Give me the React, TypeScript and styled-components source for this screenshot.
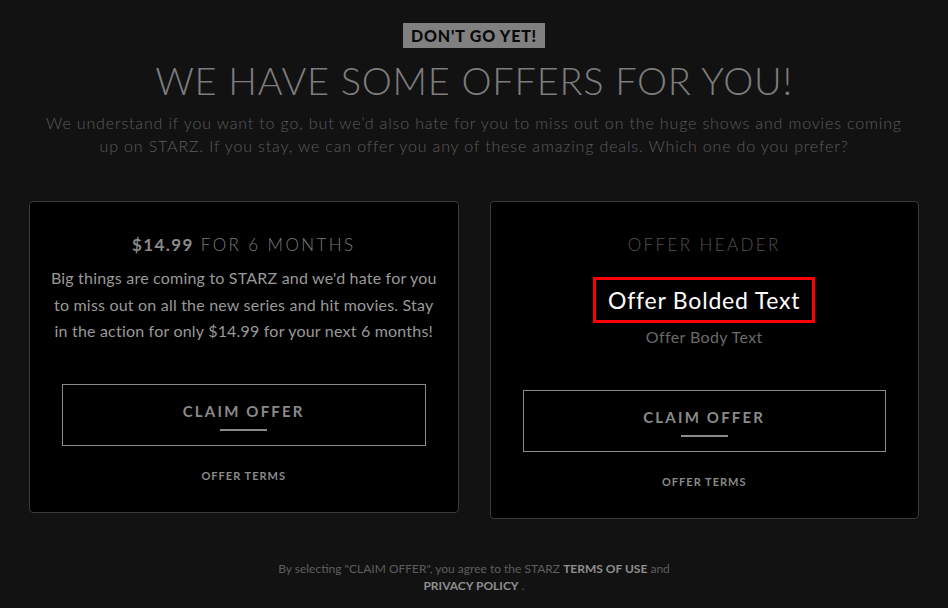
import React from "react";
import styled, { createGlobalStyle } from "styled-components";

const GlobalStyle = createGlobalStyle`
  html, body {
    margin: 0;
    padding: 0;
    background: #121212;
  }
  body {
    font-family: Lato, "Open Sans", "Liberation Sans", sans-serif;
  }
  * {
    box-sizing: border-box;
  }
`;

type Offer = {
  price?: string;
  header: string;
  bolded?: string;
  body: string;
};

// body copy keeps the line breaks of the design
const offers: Offer[] = [
  {
    price: "$14.99",
    header: "FOR 6 MONTHS",
    body:
      "Big things are coming to STARZ and we'd hate for you\nto miss out on all the new series and hit movies. Stay\nin the action for only $14.99 for your next 6 months!",
  },
  {
    header: "OFFER HEADER",
    bolded: "Offer Bolded Text",
    body: "Offer Body Text",
  },
];

const OfferCard = ({ offer }: { offer: Offer }) => (
  <Card>
    <CardHeader $dim={!offer.price}>
      {offer.price && <strong>{offer.price}</strong>} {offer.header}
    </CardHeader>
    {offer.bolded && <Bolded>{offer.bolded}</Bolded>}
    <CardBody $small={!!offer.bolded}>{offer.body}</CardBody>
    <ClaimButton $spaced={!!offer.bolded}>
      CLAIM OFFER
      <Underline />
    </ClaimButton>
    <Terms>OFFER TERMS</Terms>
  </Card>
);

const App = () => {
  return (
    <Page>
      <GlobalStyle />
      <Badge>DON'T GO YET!</Badge>
      <Title>WE HAVE SOME OFFERS FOR YOU!</Title>
      <Intro>
        We understand if you want to go, but we’d also hate for you to miss out
        on the huge shows and movies coming up on STARZ. If you stay, we can
        offer you any of these amazing deals. Which one do you prefer?
      </Intro>
      <Cards>
        {offers.map((o) => (
          <OfferCard key={o.header} offer={o} />
        ))}
      </Cards>
      <Footer>
        By selecting "CLAIM OFFER", you agree to the STARZ <b>TERMS OF USE</b>{" "}
        and
        <br />
        <b>PRIVACY POLICY</b> .
      </Footer>
    </Page>
  );
};
export default App;

const Page = styled.div`
  width: 948px;
  height: 608px;
  background: #121212;
  display: flex;
  flex-direction: column;
  align-items: center;
  padding: 23px 29px 0;
  overflow: hidden;
`;

const Badge = styled.div`
  background: #808080;
  color: #0a0a0a;
  font-weight: 900;
  font-size: 16px;
  letter-spacing: 0.8px;
  padding: 0 8px;
  height: 25px;
  line-height: 25px;
`;

const Title = styled.h1`
  margin: 10px 0 0;
  font-size: 38px;
  font-weight: 300;
  letter-spacing: 0.7px;
  color: #7d7d7d;
  line-height: 44px;
`;

const Intro = styled.p`
  margin: 9px 0 0;
  width: 880px;
  text-align: center;
  font-size: 16px;
  font-weight: 300;
  line-height: 23px;
  letter-spacing: 0.85px;
  color: #5c5c5c;
`;

const Cards = styled.div`
  margin-top: 44px;
  width: 100%;
  display: flex;
  align-items: flex-start;
  gap: 31px;
`;

const Card = styled.div`
  flex: 1;
  background: #000;
  border: 1px solid #3a3a3a;
  border-radius: 4px;
  padding: 32px 18px 30px;
  display: flex;
  flex-direction: column;
  align-items: center;
`;

const CardHeader = styled.h2<{ $dim: boolean }>`
  margin: 0;
  font-size: 17px;
  font-weight: 300;
  letter-spacing: 2.4px;
  line-height: 22px;
  color: ${(p) => (p.$dim ? "#555" : "#7c7c7c")};

  strong {
    font-weight: 700;
    color: #8a8a8a;
    letter-spacing: 1.4px;
  }
`;

const Bolded = styled.div`
  margin-top: 21px;
  border: 3px solid #f00;
  padding: 6px 12px 6px;
  color: #fff;
  font-size: 23px;
  line-height: 28px;
  letter-spacing: 0.8px;
  font-weight: 400;
`;

const CardBody = styled.p<{ $small: boolean }>`
  margin: ${(p) => (p.$small ? "3px 0 0" : "9px 0 0")};
  text-align: center;
  white-space: pre-line;
  font-size: 16px;
  line-height: ${(p) => (p.$small ? "22px" : "26.5px")};
  font-weight: 400;
  letter-spacing: ${(p) => (p.$small ? "0.4px" : "0.2px")};
  color: ${(p) => (p.$small ? "#6a6a6a" : "#999")};
`;

const ClaimButton = styled.a<{ $spaced: boolean }>`
  margin-top: ${(p) => (p.$spaced ? "42px" : "39px")};
  align-self: stretch;
  margin-left: 14px;
  margin-right: 14px;
  height: 62px;
  border: 1px solid #8a8a8a;
  display: flex;
  flex-direction: column;
  align-items: center;
  justify-content: center;
  gap: 9px;
  color: #8a8a8a;
  font-size: 15px;
  line-height: 18px;
  font-weight: 700;
  letter-spacing: 2.2px;
  padding-top: 3px;
  cursor: pointer;
`;

const Underline = styled.span`
  width: 47px;
  height: 2px;
  background: #8a8a8a;
`;

const Terms = styled.div`
  margin-top: 23px;
  font-size: 11px;
  font-weight: 700;
  letter-spacing: 1px;
  color: #8a8a8a;
`;

const Footer = styled.p`
  margin: 41px 0 0;
  text-align: center;
  font-size: 12px;
  line-height: 17px;
  color: #5e5e5e;

  b {
    color: #8e8e8e;
    font-weight: 700;
  }
`;
